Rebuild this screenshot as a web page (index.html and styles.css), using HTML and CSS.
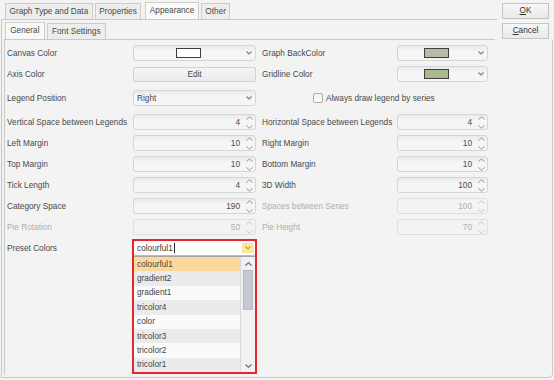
FILE: index.html
```html
<!DOCTYPE html>
<html>
<head>
<meta charset="utf-8">
<link rel="stylesheet" href="styles.css">
</head>
<body>
<div class="dialog">
  <div class="tabstrip">
    <div class="tab">Graph Type and Data</div>
    <div class="tab">Properties</div>
    <div class="tab active">Appearance</div>
    <div class="tab">Other</div>
  </div>
  <div class="outer">
    <div class="tabstrip inner-strip">
      <div class="tab active">General</div>
      <div class="tab">Font Settings</div>
    </div>
    <div class="inner">
      <div class="form">
        <div class="row">
          <span class="label">Canvas Color</span>
          <div class="field drop">
            <div class="drop-body"><span class="swatch sw-white"></span></div>
            <div class="chev"><svg width="6" height="4" viewBox="0 0 6 4"><polyline points="0.5,0.5 3,3 5.5,0.5" fill="none" stroke="#6e8093" stroke-width="1.1"/></svg></div>
          </div>
          <span class="label label2">Graph BackColor</span>
          <div class="field drop">
            <div class="drop-body"><span class="swatch sw-back"></span></div>
            <div class="chev"><svg width="6" height="4" viewBox="0 0 6 4"><polyline points="0.5,0.5 3,3 5.5,0.5" fill="none" stroke="#6e8093" stroke-width="1.1"/></svg></div>
          </div>
        </div>
        <div class="row">
          <span class="label">Axis Color</span>
          <div class="button-field">Edit</div>
          <span class="label label2">Gridline Color</span>
          <div class="field drop">
            <div class="drop-body"><span class="swatch sw-grid"></span></div>
            <div class="chev"><svg width="6" height="4" viewBox="0 0 6 4"><polyline points="0.5,0.5 3,3 5.5,0.5" fill="none" stroke="#6e8093" stroke-width="1.1"/></svg></div>
          </div>
        </div>
        <div class="row row-wide">
          <span class="label">Legend Position</span>
          <div class="field drop">
            <div class="drop-body text-left">Right</div>
            <div class="chev"><svg width="6" height="4" viewBox="0 0 6 4"><polyline points="0.5,0.5 3,3 5.5,0.5" fill="none" stroke="#6e8093" stroke-width="1.1"/></svg></div>
          </div>
          <label class="check-wrap"><span class="checkbox"></span>Always draw legend by series</label>
        </div>
        <div class="row row-wide">
          <span class="label">Vertical Space between Legends</span>
          <div class="field spin">4<span class="arrows"><svg width="7" height="13" viewBox="0 0 7 13"><polyline points="0.5,3.5 3.5,0.8 6.5,3.5" fill="none" stroke="#8797a8" stroke-width="1"/><polyline points="0.5,9.5 3.5,12.2 6.5,9.5" fill="none" stroke="#8797a8" stroke-width="1"/></svg></span></div>
          <span class="label label2">Horizontal Space between Legends</span>
          <div class="field spin">4<span class="arrows"><svg width="7" height="13" viewBox="0 0 7 13"><polyline points="0.5,3.5 3.5,0.8 6.5,3.5" fill="none" stroke="#8797a8" stroke-width="1"/><polyline points="0.5,9.5 3.5,12.2 6.5,9.5" fill="none" stroke="#8797a8" stroke-width="1"/></svg></span></div>
        </div>
        <div class="row">
          <span class="label">Left Margin</span>
          <div class="field spin">10<span class="arrows"><svg width="7" height="13" viewBox="0 0 7 13"><polyline points="0.5,3.5 3.5,0.8 6.5,3.5" fill="none" stroke="#8797a8" stroke-width="1"/><polyline points="0.5,9.5 3.5,12.2 6.5,9.5" fill="none" stroke="#8797a8" stroke-width="1"/></svg></span></div>
          <span class="label label2">Right Margin</span>
          <div class="field spin">10<span class="arrows"><svg width="7" height="13" viewBox="0 0 7 13"><polyline points="0.5,3.5 3.5,0.8 6.5,3.5" fill="none" stroke="#8797a8" stroke-width="1"/><polyline points="0.5,9.5 3.5,12.2 6.5,9.5" fill="none" stroke="#8797a8" stroke-width="1"/></svg></span></div>
        </div>
        <div class="row">
          <span class="label">Top Margin</span>
          <div class="field spin">10<span class="arrows"><svg width="7" height="13" viewBox="0 0 7 13"><polyline points="0.5,3.5 3.5,0.8 6.5,3.5" fill="none" stroke="#8797a8" stroke-width="1"/><polyline points="0.5,9.5 3.5,12.2 6.5,9.5" fill="none" stroke="#8797a8" stroke-width="1"/></svg></span></div>
          <span class="label label2">Bottom Margin</span>
          <div class="field spin">10<span class="arrows"><svg width="7" height="13" viewBox="0 0 7 13"><polyline points="0.5,3.5 3.5,0.8 6.5,3.5" fill="none" stroke="#8797a8" stroke-width="1"/><polyline points="0.5,9.5 3.5,12.2 6.5,9.5" fill="none" stroke="#8797a8" stroke-width="1"/></svg></span></div>
        </div>
        <div class="row">
          <span class="label">Tick Length</span>
          <div class="field spin">4<span class="arrows"><svg width="7" height="13" viewBox="0 0 7 13"><polyline points="0.5,3.5 3.5,0.8 6.5,3.5" fill="none" stroke="#8797a8" stroke-width="1"/><polyline points="0.5,9.5 3.5,12.2 6.5,9.5" fill="none" stroke="#8797a8" stroke-width="1"/></svg></span></div>
          <span class="label label2">3D Width</span>
          <div class="field spin">100<span class="arrows"><svg width="7" height="13" viewBox="0 0 7 13"><polyline points="0.5,3.5 3.5,0.8 6.5,3.5" fill="none" stroke="#8797a8" stroke-width="1"/><polyline points="0.5,9.5 3.5,12.2 6.5,9.5" fill="none" stroke="#8797a8" stroke-width="1"/></svg></span></div>
        </div>
        <div class="row">
          <span class="label">Category Space</span>
          <div class="field spin">190<span class="arrows"><svg width="7" height="13" viewBox="0 0 7 13"><polyline points="0.5,3.5 3.5,0.8 6.5,3.5" fill="none" stroke="#8797a8" stroke-width="1"/><polyline points="0.5,9.5 3.5,12.2 6.5,9.5" fill="none" stroke="#8797a8" stroke-width="1"/></svg></span></div>
          <span class="label label2 disabled">Spaces between Series</span>
          <div class="field spin disabled">100<span class="arrows"><svg width="7" height="13" viewBox="0 0 7 13"><polyline points="0.5,3.5 3.5,0.8 6.5,3.5" fill="none" stroke="#c2c8ce" stroke-width="1"/><polyline points="0.5,9.5 3.5,12.2 6.5,9.5" fill="none" stroke="#c2c8ce" stroke-width="1"/></svg></span></div>
        </div>
        <div class="row">
          <span class="label disabled">Pie Rotation</span>
          <div class="field spin disabled">50<span class="arrows"><svg width="7" height="13" viewBox="0 0 7 13"><polyline points="0.5,3.5 3.5,0.8 6.5,3.5" fill="none" stroke="#c2c8ce" stroke-width="1"/><polyline points="0.5,9.5 3.5,12.2 6.5,9.5" fill="none" stroke="#c2c8ce" stroke-width="1"/></svg></span></div>
          <span class="label label2 disabled">Pie Height</span>
          <div class="field spin disabled">70<span class="arrows"><svg width="7" height="13" viewBox="0 0 7 13"><polyline points="0.5,3.5 3.5,0.8 6.5,3.5" fill="none" stroke="#c2c8ce" stroke-width="1"/><polyline points="0.5,9.5 3.5,12.2 6.5,9.5" fill="none" stroke="#c2c8ce" stroke-width="1"/></svg></span></div>
        </div>
        <div class="row">
          <span class="label">Preset Colors</span>
          <div class="field combo">
            <div class="combo-input">colourful1<span class="caret"></span></div>
            <div class="combo-btn"><svg width="6" height="4" viewBox="0 0 6 4"><polyline points="0.5,0.5 3,3 5.5,0.5" fill="none" stroke="#d49a2e" stroke-width="1.1"/></svg></div>
            <div class="list">
              <div class="items">
                <div class="item selected">colourful1</div>
                <div class="item alt">gradient2</div>
                <div class="item">gradient1</div>
                <div class="item alt">tricolor4</div>
                <div class="item">color</div>
                <div class="item alt">tricolor3</div>
                <div class="item">tricolor2</div>
                <div class="item alt">tricolor1</div>
              </div>
              <div class="scrollbar">
                <div class="sb-arrow"><svg width="7" height="4" viewBox="0 0 7 4"><polyline points="0.5,3.5 3.5,0.7 6.5,3.5" fill="none" stroke="#55657a" stroke-width="1.1"/></svg></div>
                <div class="sb-track"><div class="sb-thumb"></div></div>
                <div class="sb-arrow"><svg width="7" height="4" viewBox="0 0 7 4"><polyline points="0.5,0.5 3.5,3.3 6.5,0.5" fill="none" stroke="#55657a" stroke-width="1.1"/></svg></div>
              </div>
            </div>
            <div class="highlight"></div>
          </div>
        </div>
      </div>
    </div>
  </div>
  <div class="buttons">
    <div class="btn"><u>O</u>K</div>
    <div class="btn"><u>C</u>ancel</div>
  </div>
</div>
</body>
</html>
```
FILE: styles.css
```css
* { box-sizing: border-box; }
body {
  margin: 0;
  font-family: "Liberation Sans", Arial, sans-serif;
  font-size: 8.25px;
  color: #4a4a4a;
}
.dialog {
  position: relative;
  width: 554px;
  height: 380px;
  background: #f2f3f2;
  overflow: hidden;
}
.tabstrip {
  display: flex;
  align-items: flex-end;
  height: 19px;
  padding-left: 5px;
}
.tab {
  height: 16px;
  padding: 0 3.5px;
  line-height: 15px;
  border: 1px solid #cbcdcb;
  border-bottom: none;
  background: #ecedec;
  margin-right: 2px;
  white-space: nowrap;
}
.tab.active {
  height: 17px;
  background: #f8f9f8;
  margin-left: 2px;
  line-height: 16px;
}
.outer {
  margin-left: 1px;
  width: 552px;
  height: 359px;
  border: 1px solid #c7c9c7;
  border-radius: 0 0 4px 0;
}
.inner-strip {
  height: 19px;
  padding-left: 3px;
}
.inner-strip .tab { padding: 0 4.2px; }
.inner-strip .tab.active { margin-left: 0; }
.inner {
  margin-left: 2px;
  width: 491px;
  height: 336px;
  border-top: 1px solid #c7c9c7;
  border-left: 1px solid #c7c9c7;
}
.form {
  padding: 5px 0 0 2px;
}
.row {
  display: grid;
  grid-template-columns: 126px 123px 141px 91px;
  height: 16px;
  align-items: center;
  margin-top: 5px;
}
.row:first-child { margin-top: 0; }
.row-wide { margin-top: 8px; }
.label { white-space: nowrap; }
.label2 { padding-left: 6px; }
.disabled { color: #aeb0b0; }
.field {
  position: relative;
  height: 16px;
  border: 1px solid #d4d6d4;
  border-radius: 3px;
  background: linear-gradient(#e9eae9, #f5f6f5 40%, #f4f5f4);
  display: flex;
  align-items: center;
}
.field.disabled {
  background: #f2f3f2;
  border-color: #dedfde;
}
.drop-body {
  flex: 1;
  display: flex;
  justify-content: center;
  align-items: center;
  height: 100%;
}
.drop-body.text-left { justify-content: flex-start; padding-left: 3px; }
.chev {
  width: 12px;
  display: flex;
  justify-content: center;
  align-items: center;
  padding-right: 1px;
}
.swatch {
  width: 25px;
  height: 10px;
  border: 1px solid #3e3e3e;
}
.sw-white { background: #ffffff; }
.sw-back { background: #b6baa8; }
.sw-grid { background: #a8b992; }
.button-field {
  height: 15px;
  border: 1px solid #d0d2d0;
  border-radius: 2px;
  background: linear-gradient(#f4f5f4, #e9eae9);
  text-align: center;
  line-height: 13px;
}
.check-wrap {
  grid-column: 3 / 5;
  display: flex;
  align-items: center;
  padding-left: 57px;
  white-space: nowrap;
}
.checkbox {
  width: 10px;
  height: 10px;
  border: 1px solid #a9abab;
  border-radius: 2px;
  background: linear-gradient(#f0f0f0, #fbfbfb);
  margin-right: 3px;
}
.spin {
  justify-content: flex-end;
  padding-right: 15px;
}
.arrows {
  position: absolute;
  right: 2px;
  top: 0;
  height: 14px;
  display: flex;
  align-items: center;
}
.combo {
  background: #ffffff;
  border-color: #b9bbb9;
}
.combo-input {
  flex: 1;
  padding-left: 3px;
  display: flex;
  align-items: center;
  color: #3a3a3a;
}
.caret {
  width: 1px;
  height: 10px;
  background: #222;
  margin-left: 1px;
}
.combo-btn {
  width: 12px;
  height: 10px;
  margin-right: 1px;
  background: #fbe6a2;
  display: flex;
  justify-content: center;
  align-items: center;
}
.list {
  position: absolute;
  left: -1px;
  top: 15px;
  width: 123px;
  height: 117px;
  border: 1px solid #a4a6a8;
  background: #fafafa;
  display: flex;
}
.items {
  flex: 1;
  display: flex;
  flex-direction: column;
}
.item {
  flex: 1;
  padding-left: 3px;
  display: flex;
  align-items: center;
  color: #454545;
  background: #fafafa;
}
.item.alt { background: #ebebeb; }
.item.selected { background: #fbd89c; }
.scrollbar {
  width: 15px;
  border-left: 1px solid #d9dadb;
  background: #f1f1f1;
  display: flex;
  flex-direction: column;
}
.sb-arrow {
  height: 13px;
  display: flex;
  justify-content: center;
  align-items: center;
}
.sb-track {
  flex: 1;
  padding: 0 2px;
}
.sb-thumb {
  height: 40px;
  background: #c4c8d0;
  border: 1px solid #b5bac3;
}
.highlight {
  position: absolute;
  left: -2px;
  top: -2px;
  width: 125px;
  height: 135px;
  border: 2px solid #e4262e;
}
.buttons {
  position: absolute;
  right: 0;
  top: 0;
  width: 57px;
  height: 40px;
  background: #f2f3f2;
  padding: 3px 0 0 5px;
  display: flex;
  flex-direction: column;
  gap: 4px;
}
.btn {
  width: 47px;
  height: 16px;
  border: 1px solid #c3c5c3;
  background: linear-gradient(#f6f7f6, #e8e9e8);
  text-align: center;
  line-height: 14px;
  color: #333;
}
```
